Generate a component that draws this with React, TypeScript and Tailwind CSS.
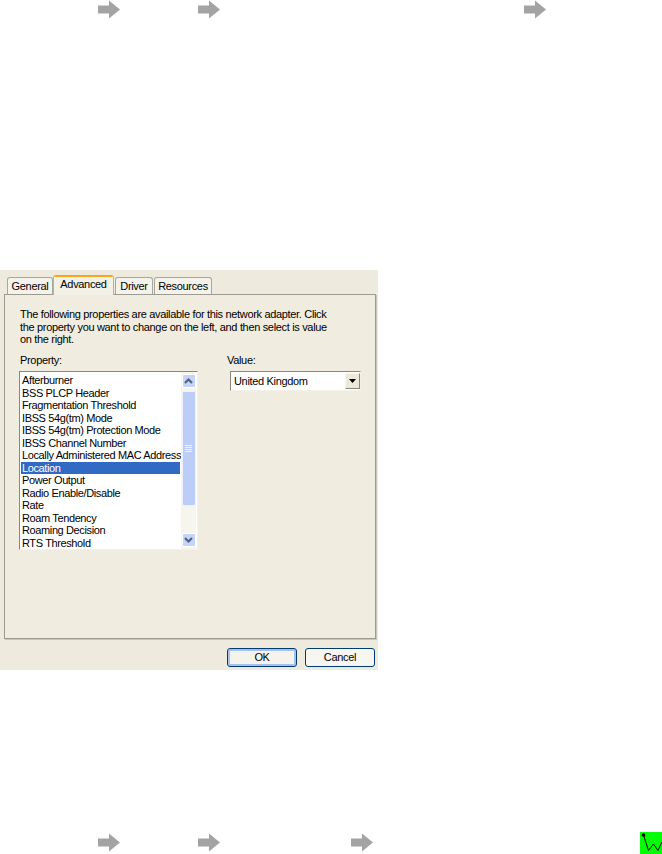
const properties = [
  "Afterburner",
  "BSS PLCP Header",
  "Fragmentation Threshold",
  "IBSS 54g(tm) Mode",
  "IBSS 54g(tm) Protection Mode",
  "IBSS Channel Number",
  "Locally Administered MAC Address",
  "Location",
  "Power Output",
  "Radio Enable/Disable",
  "Rate",
  "Roam Tendency",
  "Roaming Decision",
  "RTS Threshold",
]

function Arrow({ className }: { className: string }) {
  return (
    <svg viewBox="0 0 22 19" className={`h-[19px] w-[22px] shrink-0 blur-[0.5px] ${className}`}>
      <path d="M0 5.5H11V0.5L22 9.5L11 18.5V13.5H0Z" fill="#a3a3a3" />
    </svg>
  )
}

function Tab({ label, active, className }: { label: string; active?: boolean; className: string }) {
  if (active) {
    return (
      <div className={`relative z-10 -mb-px flex h-[20px] flex-col overflow-hidden rounded-t-[3px] border-x border-[#b5b3a6] bg-[#f3f0e6] ${className}`}>
        <div className="h-[2px] bg-[#f2a71c]" />
        <div className="flex flex-1 items-center justify-center pb-[3px]">{label}</div>
      </div>
    )
  }
  return (
    <div className={`flex h-[17px] items-center justify-center rounded-t-[3px] border-x border-t border-[#a5a99b] bg-[#f4f2ea] ${className}`}>
      {label}
    </div>
  )
}

function ScrollButton({ up }: { up?: boolean }) {
  return (
    <div className="flex h-[14px] w-[14px] items-center justify-center rounded-[2px] border border-white bg-[#c5d3f6]">
      <svg viewBox="0 0 9 6" className="h-[6px] w-[9px]">
        <path d={up ? "M1 5L4.5 1.5L8 5" : "M1 1L4.5 4.5L8 1"} fill="none" stroke="#4d6185" strokeWidth="2" />
      </svg>
    </div>
  )
}

export default function App() {
  return (
    <div className="flex h-[854px] w-[662px] flex-col overflow-hidden bg-white font-['Liberation_Sans',sans-serif] text-[11px] leading-[12.5px] tracking-[-0.33px] text-black">
      <div className="flex h-[270px] items-start">
        <Arrow className="ml-[98px]" />
        <Arrow className="ml-[78px]" />
        <Arrow className="ml-[304px]" />
      </div>

      <div className="flex h-[400px] w-[378px] flex-col bg-[#eeeadd]">
        <div className="flex h-[24px] items-end pl-[7px]">
          <Tab label="General" className="w-[46px]" />
          <Tab label="Advanced" active className="w-[61px]" />
          <Tab label="Driver" className="ml-[1px] w-[38px]" />
          <Tab label="Resources" className="ml-[1px] w-[58px]" />
        </div>

        <div className="ml-[4px] mr-[2px] h-[345px] border border-[#9d9b90] bg-[#f0ecdf] pl-[14px] pr-[13px] pt-[13px] shadow-[1px_1px_0_#c9c6b8]">
          <p className="ml-[1px] h-[38px] whitespace-nowrap">
            The following properties are available for this network adapter. Click
            <br />
            the property you want to change on the left, and then select is value
            <br />
            on the right.
          </p>

          <div className="mt-[8px] flex">
            <div className="w-[179px]">
              <div className="ml-[1px] h-[14px]">Property:</div>
              <div className="mt-[3px] flex h-[179px] overflow-hidden border border-[#8a887c] border-r-[#f3f0e6] border-b-[#f3f0e6] bg-white">
                <div className="min-w-0 flex-1 pl-[1px] pr-[1px] pt-[2px] tracking-[-0.38px]">
                  {properties.map((name) => (
                    <div
                      key={name}
                      className={`h-[12.5px] whitespace-nowrap pl-[1px] ${name === "Location" ? "bg-[#316ac5] text-white" : ""}`}
                    >
                      {name}
                    </div>
                  ))}
                </div>
                <div className="mr-[1px] flex w-[15px] shrink-0 flex-col items-center bg-[#f6f5ee] pt-[2px]">
                  <ScrollButton up />
                  <div className="mt-[3px] flex h-[115px] w-[14px] flex-col items-center justify-center gap-[1px] rounded-[2px] border border-[#eef2fd] bg-[#bccdf8]">
                    <div className="h-px w-[7px] bg-[#eef2fd]" />
                    <div className="h-px w-[7px] bg-[#eef2fd]" />
                    <div className="h-px w-[7px] bg-[#eef2fd]" />
                    <div className="h-px w-[7px] bg-[#eef2fd]" />
                  </div>
                  <div className="flex-1" />
                  <div className="mb-[2px]">
                    <ScrollButton />
                  </div>
                </div>
              </div>
            </div>

            <div className="ml-[32px] w-[131px] shrink-0">
              <div className="-ml-[3px] h-[14px]">Value:</div>
              <div className="mt-[3px] flex h-[20px] items-center border border-[#8a887c] border-r-[#f3f0e6] border-b-[#f3f0e6] bg-white pl-[3px]">
                <span className="flex-1 pt-[1px]">United Kingdom</span>
                <div className="flex h-[16px] w-[15px] items-center justify-center border border-[#f8f6ef] border-b-[#8a887c] border-r-[#8a887c] bg-[#ece9d8]">
                  <svg viewBox="0 0 7 4" className="h-[4px] w-[7px]">
                    <path d="M0 0H7L3.5 4Z" fill="#000" />
                  </svg>
                </div>
              </div>
            </div>
          </div>
        </div>

        <div className="mt-[9px] flex justify-end gap-[8px] pr-[3px]">
          <button className="h-[19px] w-[70px] rounded-[3px] border border-[#003c74] bg-[#f5f4ec] shadow-[inset_0_0_0_2px_#a9c0ee]">OK</button>
          <button className="h-[19px] w-[70px] rounded-[3px] border border-[#003c74] bg-[#f7f6f0]">Cancel</button>
        </div>
      </div>

      <div className="flex flex-1 items-start">
        <Arrow className="ml-[98px] mt-[163px]" />
        <Arrow className="ml-[78px] mt-[163px]" />
        <Arrow className="ml-[131px] mt-[163px]" />
        <svg viewBox="0 0 22 22" className="ml-[267px] mt-[162px] h-[22px] w-[22px] bg-[#00ff00]">
          <circle cx="3.5" cy="3" r="1.8" fill="#000" />
          <path d="M3.5 3L8.5 18.5L13.5 12L18 18.5L22 10" fill="none" stroke="#000" strokeWidth="1" />
        </svg>
      </div>
    </div>
  )
}
